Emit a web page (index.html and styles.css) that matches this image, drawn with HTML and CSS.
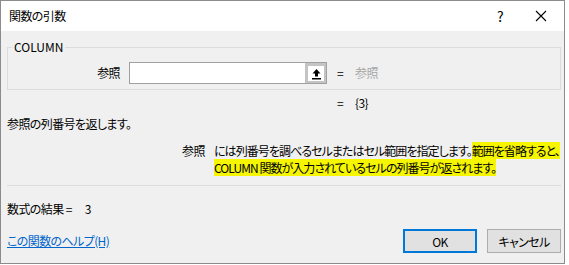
FILE: index.html
```html
<!DOCTYPE html>
<html lang="ja">
<head>
    <meta charset="UTF-8">
    <title>関数の引数</title>
    <link rel="stylesheet" href="styles.css">
</head>
<body>
    <div class="dialog">
        <div class="titlebar">
            <span class="title">関数の引数</span>
            <span class="help">?</span>
            <span class="close">
                <svg width="12" height="12" viewBox="0 0 12 12">
                    <path d="M1 1 L11 11 M11 1 L1 11" stroke="#000" stroke-width="1.1" fill="none"/>
                </svg>
            </span>
        </div>
        <div class="content">
            <fieldset class="group">
                <legend>COLUMN</legend>
                <div class="arg-row">
                    <label class="arg-name">参照</label>
                    <div class="ref-input">
                        <span class="ref-field"></span>
                        <span class="ref-btn">
                            <svg width="11" height="12" viewBox="0 0 11 12">
                                <path d="M5.5 1 L9.5 5.5 L7 5.5 L7 8.5 L4 8.5 L4 5.5 L1.5 5.5 Z" fill="#000"/>
                                <rect x="1" y="10" width="9" height="1.5" fill="#000"/>
                            </svg>
                        </span>
                    </div>
                    <span class="eq">=</span>
                    <span class="muted">参照</span>
                </div>
            </fieldset>

            <div class="result-row">
                <span class="eq">=</span>
                <span>{3}</span>
            </div>

            <p class="summary">参照の列番号を返します。</p>

            <div class="desc">
                <span class="desc-name">参照</span>
                <p class="desc-text">には列番号を調べるセルまたはセル範囲を指定します。<mark>範囲を省略すると、<br>COLUMN 関数が入力されているセルの列番号が返されます。</mark></p>
            </div>

            <hr class="sep">

            <p class="formula">数式の結果 =<span class="formula-value">3</span></p>

            <div class="footer">
                <a href="#" class="help-link">この関数のヘルプ(H)</a>
                <button class="btn btn-primary">OK</button>
                <button class="btn">キャンセル</button>
            </div>
        </div>
    </div>
</body>
</html>
```

FILE: styles.css
```css
body {
    margin: 0;
    background-color: #ffffff;
    font-family: "Noto Sans CJK JP", "Noto Sans", sans-serif;
    font-size: 12px;
    line-height: 16px;
    color: #000;
    letter-spacing: -0.6px;
    font-feature-settings: "palt";
}
.dialog {
    width: 565px;
    height: 264px;
    box-sizing: border-box;
    border: 1px solid #8c8c8c;
    background-color: #f0f0f0;
    display: flex;
    flex-direction: column;
}
.titlebar {
    height: 30px;
    background-color: #ffffff;
    display: flex;
    align-items: center;
    padding-left: 8px;
    flex-shrink: 0;
}
.title {
    flex: 1;
}
.help {
    font-size: 14px;
    width: 20px;
    text-align: center;
    margin-right: 25px;
}
.close {
    display: flex;
    width: 12px;
    margin-right: 17px;
}
.content {
    padding: 0 3px 0 6px;
    display: flex;
    flex-direction: column;
}
.group {
    margin: 8px 0 0 0;
    padding: 7px 0 5px 0;
    border: 1px solid #dcdcdc;
    min-width: 0;
}
.group legend {
    padding: 0 2px;
    margin-left: 4px;
    line-height: 16px;
    letter-spacing: 0;
}
.arg-row {
    display: flex;
    align-items: center;
    height: 22px;
}
.arg-name {
    width: 112px;
    text-align: right;
    margin-right: 9px;
}
.ref-input {
    display: flex;
    width: 198px;
    height: 22px;
    box-sizing: border-box;
    border: 1px solid #a0a0a0;
    background-color: #ffffff;
}
.ref-field {
    flex: 1;
}
.ref-btn {
    width: 21px;
    box-sizing: border-box;
    border: 3px solid #c4c4c4;
    border-right-width: 2px;
    border-bottom-width: 2px;
    display: flex;
    align-items: center;
    justify-content: center;
    background-color: #ffffff;
}
.eq {
    display: inline-block;
    width: 18px;
    margin-left: 10px;
}
.muted {
    color: #a6a6a6;
}
.result-row {
    margin-top: 5px;
    padding-left: 320px;
    display: flex;
}
.summary {
    margin: 5px 0 0 0;
}
.desc {
    display: flex;
    margin-top: 10px;
    padding-left: 175px;
    line-height: 17px;
}
.desc-name {
    width: 32px;
    flex-shrink: 0;
}
.desc-text {
    margin: 0;
    white-space: nowrap;
    letter-spacing: -0.95px;
}
.desc-text mark {
    background-color: #f6f600;
    color: #000;
}
.sep {
    margin: 9px 0 0 0;
    border: none;
    border-top: 1px solid #dcdcdc;
}
.formula {
    margin: 15px 0 0 0;
}
.formula-value {
    margin-left: 13px;
}
.footer {
    display: flex;
    align-items: center;
    margin-top: 12px;
    gap: 10px;
}
.help-link {
    flex: 1;
    color: #0066cc;
    text-decoration: underline;
}
.btn {
    width: 74px;
    height: 24px;
    box-sizing: border-box;
    border: 1px solid #adadad;
    background-color: #e1e1e1;
    font-family: inherit;
    font-size: 12px;
    padding: 0;
    letter-spacing: -0.6px;
    font-feature-settings: "palt";
}
.btn-primary {
    border: 2px solid #0078d7;
}
```
